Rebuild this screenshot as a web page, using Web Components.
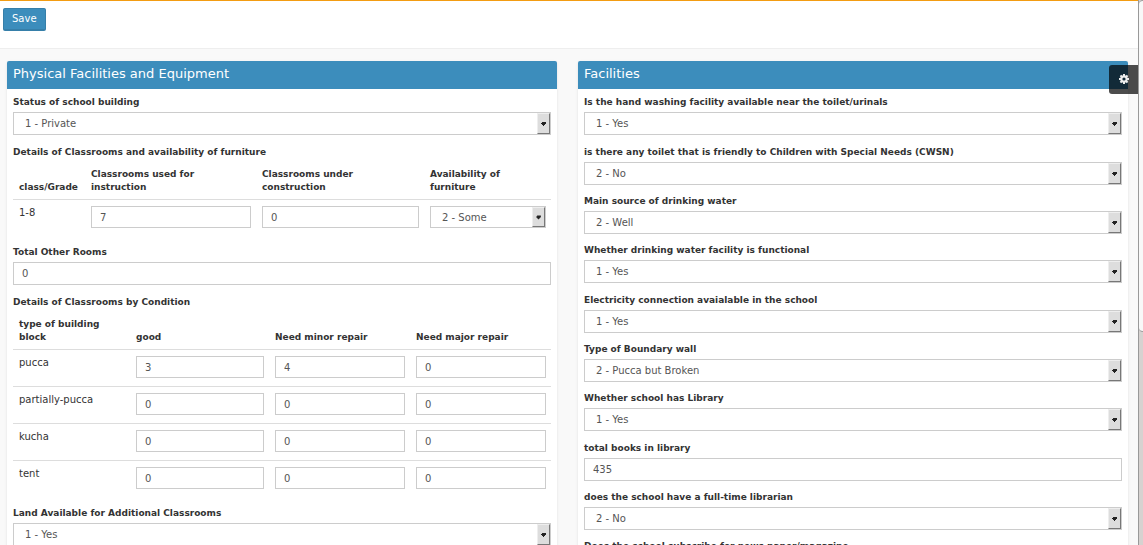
<!DOCTYPE html>
<html lang="en">
<head>
<meta charset="utf-8">
<title>School facilities</title>
<style>
  body { margin: 0; font: 10px/13px "DejaVu Sans", sans-serif; color: #333; background: #f9f9f9; }
</style>
</head>
<body>
<school-app>
  <facility-panel slot="left" heading="Physical Facilities and Equipment">
    <form-field label="Status of school building" value="1 - Private" type="select"></form-field>
    <data-grid label="Details of Classrooms and availability of furniture" columns="class/Grade:72|Classrooms used for instruction:171|Classrooms under construction:168|Availability of furniture:0" rows="1-8|7|0|2 - Some"></data-grid>
    <form-field label="Total Other Rooms" value="0" type="text"></form-field>
    <data-grid label="Details of Classrooms by Condition" columns="type of building block:117|good:139|Need minor repair:141|Need major repair:0" rows="pucca|3|4|0;partially-pucca|0|0|0;kucha|0|0|0;tent|0|0|0"></data-grid>
    <form-field label="Land Available for Additional Classrooms" value="1 - Yes" type="select"></form-field>
  </facility-panel>
  <facility-panel slot="right" heading="Facilities" compact>
    <form-field label="Is the hand washing facility available near the toilet/urinals" value="1 - Yes" type="select"></form-field>
    <form-field label="is there any toilet that is friendly to Children with Special Needs (CWSN)" value="2 - No" type="select"></form-field>
    <form-field label="Main source of drinking water" value="2 - Well" type="select"></form-field>
    <form-field label="Whether drinking water facility is functional" value="1 - Yes" type="select"></form-field>
    <form-field label="Electricity connection avaialable in the school" value="1 - Yes" type="select"></form-field>
    <form-field label="Type of Boundary wall" value="2 - Pucca but Broken" type="select"></form-field>
    <form-field label="Whether school has Library" value="1 - Yes" type="select"></form-field>
    <form-field label="total books in library" value="435" type="text"></form-field>
    <form-field label="does the school have a full-time librarian" value="2 - No" type="select"></form-field>
    <form-field label="Does the school subscribe for news paper/magazine" value="1 - Yes" type="select"></form-field>
  </facility-panel>
</school-app>

<script>
const controlCss = `
  *, *::before, *::after { box-sizing: border-box; }
  input, select {
    display: block; width: 100%; height: 23px; margin: 0; padding: 0 8px;
    border: 1px solid #ccc; border-radius: 0; background: #fff; color: #555;
    font: inherit; appearance: none; outline-offset: -1px;
  }
  select { padding: 0 20px 0 11px; }
  .pick { position: relative; }
  .pick svg {
    position: absolute; top: 1px; right: 1px; width: 13px; height: calc(100% - 2px);
    pointer-events: none; background: #ddd; border: 1px solid;
    border-color: #eee #777 #777 #eee;
  }`;

const selectHtml = (value, attrs) => `
  <div class="pick"><select ${attrs}><option>${value}</option></select>
  <svg viewBox="0 0 11 19" aria-hidden="true"><path d="M4 8h4v1h-4zM3 9h5v1h-1v1h-1v1h-1v-1h-1v-1h-1z" fill="#222"/></svg></div>`;

class FormField extends HTMLElement {
  connectedCallback() {
    const value = this.getAttribute('value');
    const control = this.getAttribute('type') === 'select'
      ? selectHtml(value, 'id="control"')
      : `<input id="control" type="text" value="${value}">`;
    this.attachShadow({ mode: 'open' }).innerHTML = `
      <style>${controlCss}
        :host { display: block; }
        label { display: block; margin-bottom: 3px; font-size: 9px; font-weight: bold; }
      </style>
      <label for="control">${this.getAttribute('label')}</label>${control}`;
  }
}
customElements.define('form-field', FormField);

class DataGrid extends HTMLElement {
  connectedCallback() {
    const columns = this.getAttribute('columns').split('|').map(c => c.split(':'));
    const rows = this.getAttribute('rows').split(';').map(r => r.split('|'));
    const cell = (row, value, i) => {
      if (i === 0) return `<td>${value}</td>`;
      const attrs = `aria-label="${row[0]} ${columns[i][0]}"`;
      return `<td>${value.includes(' - ') ? selectHtml(value, attrs) : `<input type="text" value="${value}" ${attrs}>`}</td>`;
    };
    this.attachShadow({ mode: 'open' }).innerHTML = `
      <style>${controlCss}
        :host { display: block; }
        table { width: 100%; table-layout: fixed; border-collapse: separate; border-spacing: 0; }
        caption { margin-bottom: 3px; text-align: left; font-size: 9px; font-weight: bold; }
        th { padding: 6px 5px 5px 6px; font-size: 9px; text-align: left; vertical-align: bottom; }
        td { padding: 6px 5px 8px 6px; vertical-align: top; border-top: 1px solid #ddd; }
        td input, td select { height: 22px; }
      </style>
      <table>
        <caption>${this.getAttribute('label')}</caption>
        <colgroup>${columns.map(([, w]) => +w ? `<col style="width:${w}px">` : '<col>').join('')}</colgroup>
        <thead><tr>${columns.map(([name]) => `<th scope="col">${name}</th>`).join('')}</tr></thead>
        <tbody>${rows.map(r => `<tr>${r.map((v, i) => cell(r, v, i)).join('')}</tr>`).join('')}</tbody>
      </table>`;
  }
}
customElements.define('data-grid', DataGrid);

class FacilityPanel extends HTMLElement {
  connectedCallback() {
    this.attachShadow({ mode: 'open' }).innerHTML = `
      <style>
        :host { display: block; background: #fff; border-radius: 2px; box-shadow: 0 1px 3px rgba(0,0,0,.1); }
        h2 { margin: 0; padding: 3px 6px 5px; border-radius: 2px 2px 0 0; background: #3c8dbc; color: #fff; font-size: 13px; font-weight: normal; line-height: 20px; }
        .body { padding: 7px 6px; }
        ::slotted(*) { margin-bottom: 11px; }
        ::slotted(data-grid) { margin-bottom: 10px; }
        :host([compact]) ::slotted(*) { margin-bottom: 10px; }
        :host([compact]) ::slotted(:nth-child(3n+1)) { margin-bottom: 11px; }
      </style>
      <h2>${this.getAttribute('heading')}</h2>
      <div class="body"><slot></slot></div>`;
  }
}
customElements.define('facility-panel', FacilityPanel);

class SchoolApp extends HTMLElement {
  connectedCallback() {
    this.attachShadow({ mode: 'open' }).innerHTML = `
      <style>
        *, *::before { box-sizing: border-box; }
        :host { display: grid; grid-template-columns: minmax(0, 1fr) 5px; height: 100vh; overflow: hidden; position: relative; }
        .page { overflow-y: auto; scrollbar-width: none; }
        header { height: 49px; padding: 7px 3px; background: #fff; border-top: 1px solid #f39c12; border-bottom: 1px solid #eee; }
        .save { display: block; height: 23px; padding: 0 8px 1px; border: 1px solid #367fa9; border-bottom-width: 2px; border-radius: 2px; background: #3c8dbc; color: #fff; font: inherit; }
        main { display: grid; grid-template-columns: minmax(0, 1fr) minmax(0, 1fr); gap: 21px; align-items: start; padding: 12px 10px 20px 7px; }
        .settings { position: absolute; top: 65px; right: 5px; display: flex; align-items: center; justify-content: center; width: 29px; height: 29px; padding: 0 0 1px; border: 0; border-radius: 3px 0 0 3px; background: rgba(0,0,0,.7); }
        .track { border-left: 1px solid #999; background: #d6d2d0; }
        .thumb { height: 61vh; border: 1px solid #999; border-width: 1px 0 1px 0; border-radius: 5px 0 0 5px; background: #f8f8f8; }
      </style>
      <div class="page">
        <header><button class="save" type="button">Save</button></header>
        <main><slot name="left"></slot><slot name="right"></slot></main>
      </div>
      <div class="track"><div class="thumb"></div></div>
      <button class="settings" type="button" aria-label="Settings">
        <svg width="10" height="10" viewBox="0 0 10 10" aria-hidden="true">
          <g fill="#eee"><path d="M4 0h2v10h-2zM0 4h10v2h-10z"/><path d="M4 0h2v10h-2zM0 4h10v2h-10z" transform="rotate(45 5 5)"/></g>
          <circle cx="5" cy="5" r="2.7" fill="none" stroke="#eee" stroke-width="2"/><circle cx="5" cy="5" r="1.6" fill="#132b39"/>
        </svg>
      </button>`;
  }
}
customElements.define('school-app', SchoolApp);
</script>
</body>
</html>
